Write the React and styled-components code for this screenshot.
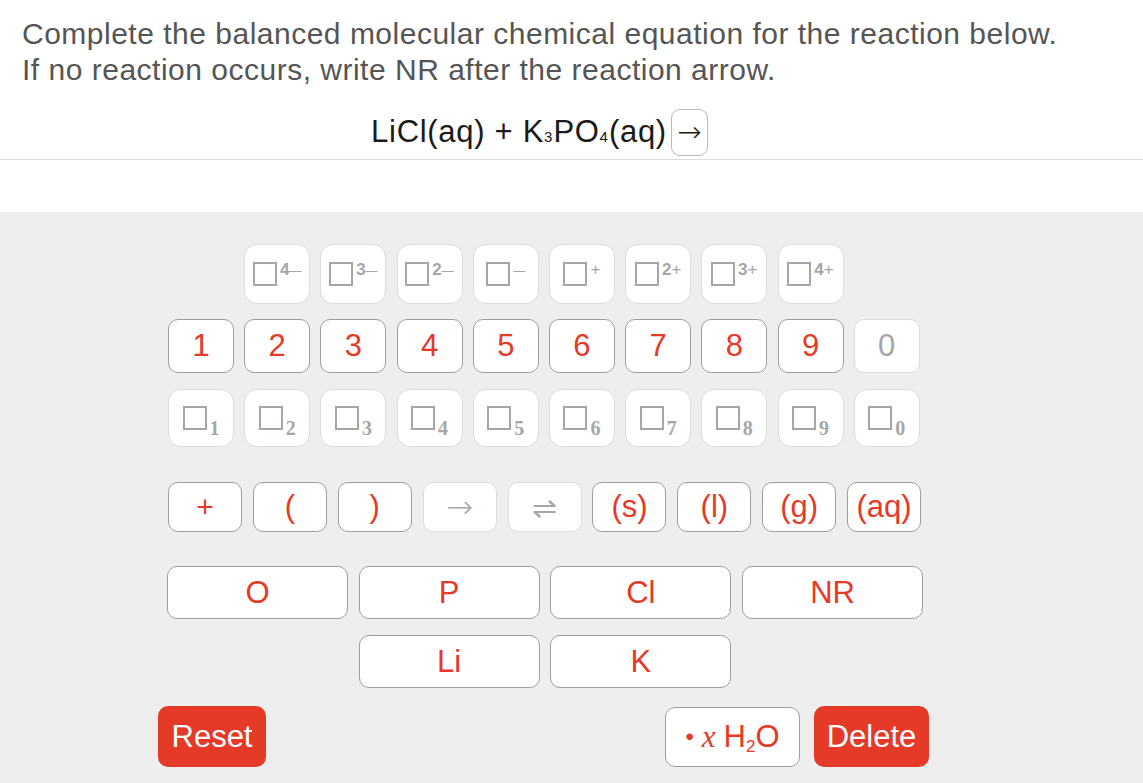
import React from "react";
import styled, { createGlobalStyle } from "styled-components";

const RED = "#e53a27";
const GRAY = "#a6a6a6";

const GlobalStyle = createGlobalStyle`
  body {
    margin: 0;
    background: #fff;
    font-family: "Liberation Sans", Arial, sans-serif;
  }
`;

const Page = styled.div`
  width: 1143px;
  min-height: 783px;
  display: flex;
  flex-direction: column;
`;

const Prompt = styled.div`
  padding: 16px 22px 0;
  color: #555;
  font-size: 30px;
  letter-spacing: 0.5px;
  line-height: 36px;
`;

const Equation = styled.div`
  display: flex;
  align-items: center;
  justify-content: center;
  padding: 20px 64px 0 0;
  height: 48px;
  color: #1a1a1a;
  font-size: 31px;
  letter-spacing: 0.7px;
`;

const Sub = styled.span`
  font-size: 15px;
  letter-spacing: 1px;
  position: relative;
  top: 4px;
`;

const AnswerBox = styled.span`
  display: inline-flex;
  align-items: center;
  justify-content: center;
  width: 35px;
  height: 45px;
  margin-left: 4px;
  border: 1px solid #bbb;
  border-radius: 9px;
  font-family: "DejaVu Sans", sans-serif;
  font-weight: 200;
  font-size: 29px;
  letter-spacing: 0;
`;

const Divider = styled.div`
  margin-top: 3px;
  height: 1px;
  background: #ddd;
`;

const Panel = styled.div`
  margin-top: 52px;
  flex: 1;
  background: #eee;
  padding: 32px 0 16px 158px;
`;

const Grid = styled.div`
  display: grid;
  grid-template-columns: repeat(${(p) => p.$cols}, ${(p) => p.$w}px);
  column-gap: ${(p) => p.$gap}px;
  margin-left: ${(p) => p.$left ?? 10}px;
  margin-top: ${(p) => p.$top}px;
`;

const Key = styled.div`
  grid-column: ${(p) => p.$col || "auto"};
  height: ${(p) => p.$h}px;
  display: flex;
  align-items: center;
  justify-content: center;
  background: #fff;
  border-radius: ${(p) => p.$r ?? 10}px;
  box-sizing: border-box;
  border: 1px solid ${(p) => (p.$off ? "#dcdcdc" : "#9e9e9e")};
  color: ${(p) => (p.$off ? GRAY : RED)};
  font-size: ${(p) => p.$fs ?? 31}px;
  font-family: ${(p) => (p.$glyph ? '"DejaVu Sans", sans-serif' : '"Liberation Sans", Arial, sans-serif')};
  font-weight: ${(p) => (p.$glyph ? 200 : 400)};
`;

const Slot = styled.span`
  display: inline-block;
  width: 20px;
  height: 20px;
  border: 2px solid ${GRAY};
`;

const Charge = styled.span`
  align-self: flex-start;
  margin-top: 16px;
  margin-left: 3px;
  font-size: 17px;
  font-weight: bold;
  color: ${GRAY};
  line-height: 1;
`;

const Dash = styled.span`
  font-weight: normal;
  font-size: ${(p) => (p.$minus ? 12 : 17)}px;
`;

const Index = styled.span`
  align-self: flex-end;
  margin-bottom: 8px;
  margin-left: 3px;
  font-family: "Liberation Serif", serif;
  font-weight: bold;
  font-size: 20px;
  color: ${GRAY};
  line-height: 1;
`;

const BottomRow = styled.div`
  display: flex;
  align-items: center;
  margin-top: 18px;
  width: 771px;
`;

const RedButton = styled.div`
  width: ${(p) => p.$w}px;
  height: 61px;
  border-radius: 10px;
  background: ${RED};
  color: #fff;
  font-size: 31px;
  display: flex;
  align-items: center;
  justify-content: center;
`;

const WaterButton = styled.div`
  margin-left: auto;
  margin-right: 14px;
  width: 135px;
  height: 60px;
  box-sizing: border-box;
  border: 1px solid #9e9e9e;
  border-radius: 10px;
  background: #fff;
  color: ${RED};
  font-size: 31px;
  display: flex;
  align-items: center;
  justify-content: center;
  gap: 8px;
`;

const Dot = styled.span`
  font-size: 24px;
`;

const Ital = styled.span`
  font-family: "Liberation Serif", serif;
  font-style: italic;
`;

const WaterSub = styled.span`
  font-size: 17px;
  position: relative;
  top: 5px;
`;

const charges = [
  ["4", "—"],
  ["3", "—"],
  ["2", "—"],
  ["", "—"],
  ["", "+"],
  ["2", "+"],
  ["3", "+"],
  ["4", "+"],
];

const states = ["(s)", "(l)", "(g)", "(aq)"];

export default function App() {
  return (
    <Page>
      <GlobalStyle />
      <Prompt>
        Complete the balanced molecular chemical equation for the reaction below.
        <br />
        If no reaction occurs, write NR after the reaction arrow.
      </Prompt>
      <Equation>
        LiCl(aq) + K<Sub>3</Sub>PO<Sub>4</Sub>(aq)
        <AnswerBox>→</AnswerBox>
      </Equation>
      <Divider />
      <Panel>
        <Grid $cols={10} $w={66} $gap={10.2} $top={0}>
          {charges.map(([n, s], i) => (
            <Key key={i} $col={i === 0 ? 2 : "auto"} $h={60} $r={13} $off>
              <Slot />
              <Charge>
                {n}
                <Dash $minus={s === "—"}>{s}</Dash>
              </Charge>
            </Key>
          ))}
        </Grid>
        <Grid $cols={10} $w={66} $gap={10.2} $top={15}>
          {[1, 2, 3, 4, 5, 6, 7, 8, 9, 0].map((d) => (
            <Key key={d} $h={54} $off={d === 0}>
              {d}
            </Key>
          ))}
        </Grid>
        <Grid $cols={10} $w={66} $gap={10.2} $top={16}>
          {[1, 2, 3, 4, 5, 6, 7, 8, 9, 0].map((d) => (
            <Key key={d} $h={58} $r={13} $off>
              <Slot />
              <Index>{d}</Index>
            </Key>
          ))}
        </Grid>
        <Grid $cols={9} $w={74} $gap={10.9} $top={35}>
          <Key $h={50} $fs={30}>+</Key>
          <Key $h={50}>(</Key>
          <Key $h={50}>)</Key>
          <Key $h={50} $off $glyph $fs={32}>→</Key>
          <Key $h={50} $off $glyph $fs={30}>⇌</Key>
          {states.map((s) => (
            <Key key={s} $h={50}>
              {s}
            </Key>
          ))}
        </Grid>
        <Grid $cols={4} $w={181} $gap={10.7} $left={9} $top={34}>
          {["O", "P", "Cl", "NR"].map((s) => (
            <Key key={s} $h={53}>
              {s}
            </Key>
          ))}
        </Grid>
        <Grid $cols={4} $w={181} $gap={10.7} $left={9} $top={16}>
          <Key $col={2} $h={53}>Li</Key>
          <Key $h={53}>K</Key>
        </Grid>
        <BottomRow>
          <RedButton $w={108}>Reset</RedButton>
          <WaterButton>
            <Dot>•</Dot>
            <Ital>x</Ital>
            <span>
              H<WaterSub>2</WaterSub>O
            </span>
          </WaterButton>
          <RedButton $w={115}>Delete</RedButton>
        </BottomRow>
      </Panel>
    </Page>
  );
}
